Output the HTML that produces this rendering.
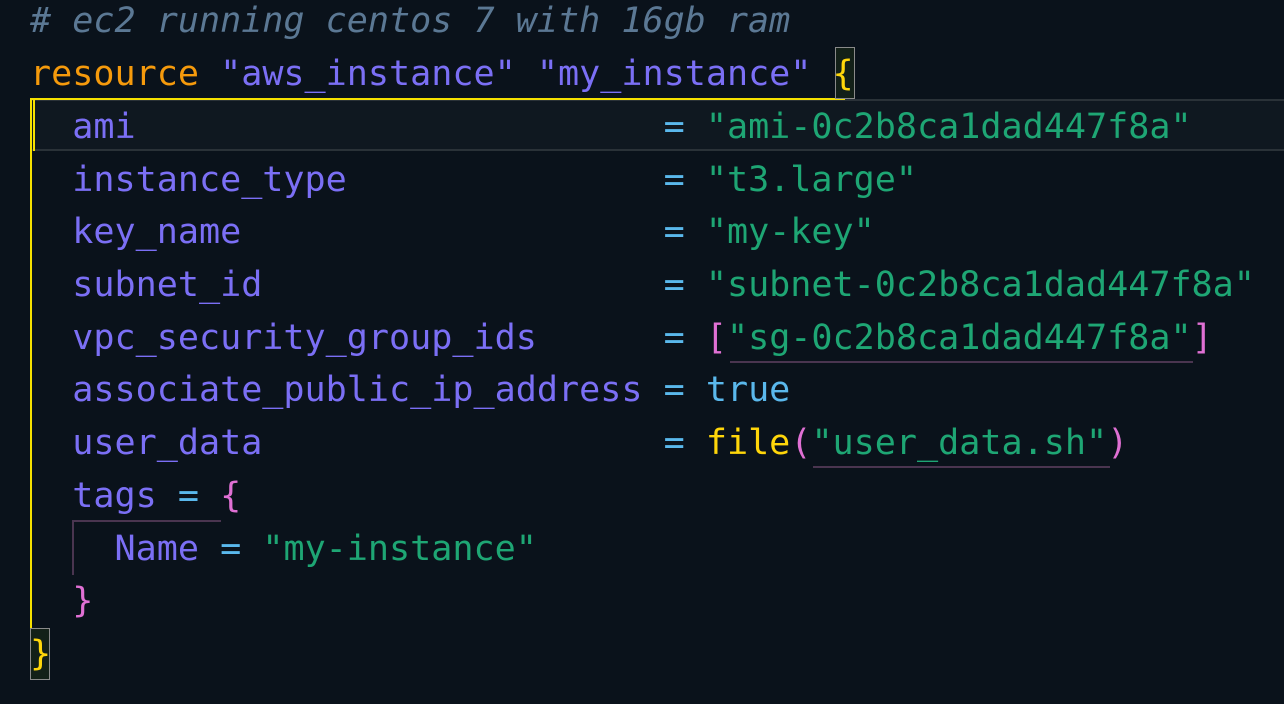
<!DOCTYPE html>
<html><head><style>
html,body{margin:0;padding:0;background:#0a121b;width:1284px;height:704px;overflow:hidden;position:relative}
.l{position:absolute;left:30px;height:53px;line-height:53px;font-family:"DejaVu Sans Mono","Liberation Mono",monospace;font-size:35.1px;white-space:pre;color:#7b6ff5}
.c{color:#5b7894;font-style:italic}
.o{color:#f59a0c}.p{color:#7b6ff5}.g{color:#1ea674}.e{color:#5ab8ec}.k{color:#e070d4}.y{color:#ffd60a}
.abs{position:absolute}
</style></head><body>
<div class="abs" style="left:32px;top:100px;width:1252px;height:50px;background:#0f1820"></div>
<div class="abs" style="left:32px;top:99px;width:1252px;height:2px;background:#2a3238"></div>
<div class="abs" style="left:32px;top:149px;width:1252px;height:2px;background:#2a3238"></div>
<div class="abs" style="left:30px;top:98px;width:815px;height:2px;background:#f5e000"></div>
<div class="abs" style="left:30px;top:98px;width:2px;height:531px;background:#f5e000"></div>
<div class="abs" style="left:33px;top:99px;width:2px;height:52px;background:#f5e000"></div>
<div class="abs" style="left:835px;top:47px;width:18px;height:50px;border:1.5px solid #8a8a8a;background:#132018"></div>
<div class="abs" style="left:30px;top:628px;width:18px;height:50px;border:1.5px solid #8a8a8a;background:#132018"></div>
<div class="abs" style="left:73px;top:520px;width:148px;height:2px;background:#4a3550"></div>
<div class="abs" style="left:72px;top:520px;width:2px;height:55px;background:#4a3550"></div>
<div class="abs" style="left:730px;top:361px;width:463px;height:2px;background:#4a3550"></div>
<div class="abs" style="left:813px;top:466px;width:297px;height:2px;background:#4a3550"></div>

<div class="l c" style="top:-6px"># ec2 running centos 7 with 16gb ram</div>
<div class="l" style="top:47px"><span class="o">resource</span> <span class="p">"aws_instance"</span> <span class="p">"my_instance"</span> <span class="y">{</span></div>
<div class="l" style="top:100px">  ami                         <span class="e">=</span> <span class="g">"ami-0c2b8ca1dad447f8a"</span></div>
<div class="l" style="top:153px">  instance_type               <span class="e">=</span> <span class="g">"t3.large"</span></div>
<div class="l" style="top:205px">  key_name                    <span class="e">=</span> <span class="g">"my-key"</span></div>
<div class="l" style="top:258px">  subnet_id                   <span class="e">=</span> <span class="g">"subnet-0c2b8ca1dad447f8a"</span></div>
<div class="l" style="top:311px">  vpc_security_group_ids      <span class="e">=</span> <span class="k">[</span><span class="g">"sg-0c2b8ca1dad447f8a"</span><span class="k">]</span></div>
<div class="l" style="top:363px">  associate_public_ip_address <span class="e">=</span> <span class="e">true</span></div>
<div class="l" style="top:416px">  user_data                   <span class="e">=</span> <span class="y">file</span><span class="k">(</span><span class="g">"user_data.sh"</span><span class="k">)</span></div>
<div class="l" style="top:469px">  tags <span class="e">=</span> <span class="k">{</span></div>
<div class="l" style="top:522px">    Name <span class="e">=</span> <span class="g">"my-instance"</span></div>
<div class="l" style="top:574px">  <span class="k">}</span></div>
<div class="l" style="top:627px"><span class="y">}</span></div>
</body></html>
